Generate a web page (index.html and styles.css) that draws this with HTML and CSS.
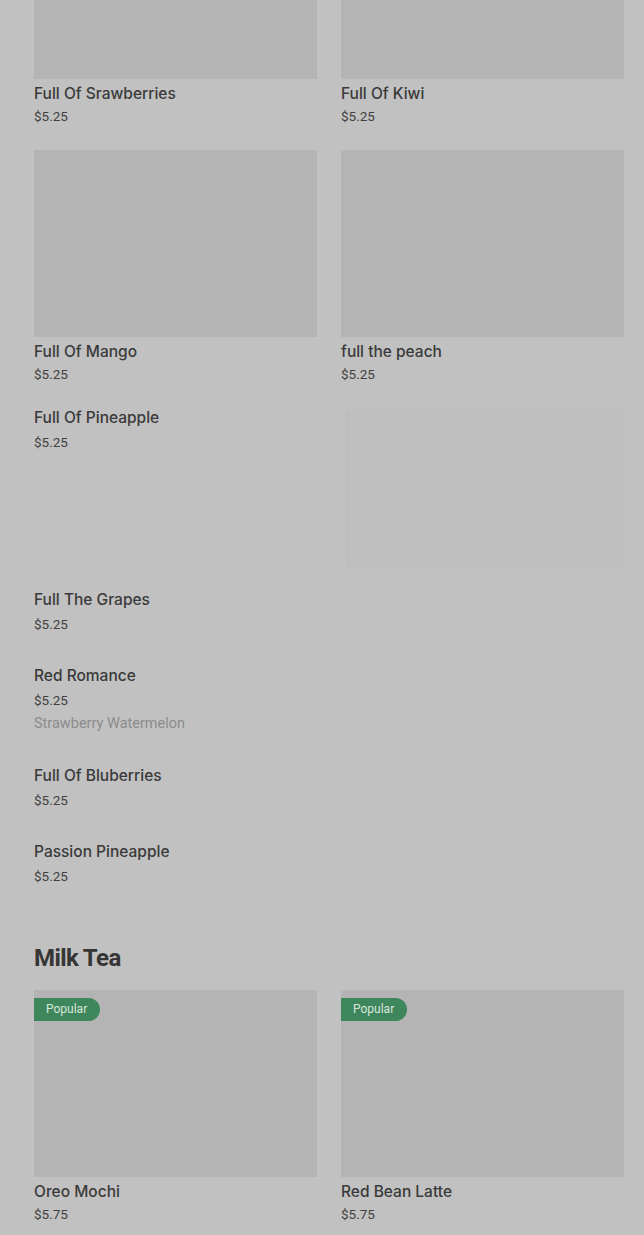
FILE: index.html
```html
<!DOCTYPE html>
<html>
<head>
<meta charset="utf-8">
<link rel="stylesheet" href="styles.css">
</head>
<body>
<main class="page">
  <section class="grid">
    <div class="card"><div class="thumb"></div><div class="name">Full Of Srawberries</div><div class="price">$5.25</div></div>
    <div class="card"><div class="thumb"></div><div class="name">Full Of Kiwi</div><div class="price">$5.25</div></div>
    <div class="card"><div class="thumb"></div><div class="name">Full Of Mango</div><div class="price">$5.25</div></div>
    <div class="card"><div class="thumb"></div><div class="name">full the peach</div><div class="price">$5.25</div></div>
  </section>

  <section class="list">
    <div class="item item-img">
      <div class="item-text">
        <div class="name">Full Of Pineapple</div>
        <div class="price">$5.25</div>
      </div>
      <div class="item-thumb"></div>
    </div>
    <div class="item">
      <div class="name">Full The Grapes</div>
      <div class="price">$5.25</div>
    </div>
    <div class="item">
      <div class="name">Red Romance</div>
      <div class="price">$5.25</div>
      <div class="desc">Strawberry Watermelon</div>
    </div>
    <div class="item">
      <div class="name">Full Of Bluberries</div>
      <div class="price">$5.25</div>
    </div>
    <div class="item">
      <div class="name">Passion Pineapple</div>
      <div class="price">$5.25</div>
    </div>
  </section>

  <h2 class="section-title">Milk Tea</h2>
  <section class="grid">
    <div class="card"><div class="thumb"><span class="badge">Popular</span></div><div class="name">Oreo Mochi</div><div class="price">$5.75</div></div>
    <div class="card"><div class="thumb"><span class="badge">Popular</span></div><div class="name">Red Bean Latte</div><div class="price">$5.75</div></div>
  </section>
</main>
</body>
</html>
```

FILE: styles.css
```css
html, body {
  margin: 0;
  padding: 0;
  background: #c1c1c1;
  overflow: hidden;
}
body {
  font-family: Roboto, "Liberation Sans", sans-serif;
  color: #3a3a3a;
}
.page {
  padding: 0 20px 0 34px;
  margin-top: -108px;
}
.grid {
  display: grid;
  grid-template-columns: 1fr 1fr;
  column-gap: 24px;
  row-gap: 23px;
}
.card {
  display: flex;
  flex-direction: column;
}
.thumb {
  position: relative;
  height: 187px;
  background: #b4b4b4;
  margin-bottom: 3px;
}
.name {
  font-family: Inter, Roboto, sans-serif;
  font-size: 15.5px;
  font-weight: 500;
  line-height: 24px;
  color: #3a3a3a;
}
.price {
  font-size: 13.5px;
  line-height: 22px;
  color: #424242;
}
.card .price {
  line-height: 21px;
}
.list {
  margin-top: 7px;
}
.item {
  padding: 14px 0;
}
.item-img {
  display: flex;
  align-items: flex-start;
  padding: 14px 0 9px;
}
.item-text {
  flex: 1;
}
.item .price {
  line-height: 24px;
}
.item-thumb {
  width: 276px;
  height: 155px;
  margin-top: 4px;
  background: #bfbfbf;
  box-shadow: -1px 1px 3px rgba(0,0,0,0.04);
}
.desc {
  font-size: 14.5px;
  line-height: 24px;
  color: #8c8c8c;
}
.section-title {
  margin: 40px 0 16px;
  font-size: 24px;
  line-height: 32px;
  font-weight: 700;
  letter-spacing: -0.6px;
  color: #353535;
}
.badge {
  position: absolute;
  top: 8px;
  left: 0;
  height: 23px;
  line-height: 23px;
  padding: 0 13px 0 12px;
  font-size: 12px;
  color: #d9e6dc;
  background: #3e865c;
  border-radius: 0 12px 12px 0;
}
```
